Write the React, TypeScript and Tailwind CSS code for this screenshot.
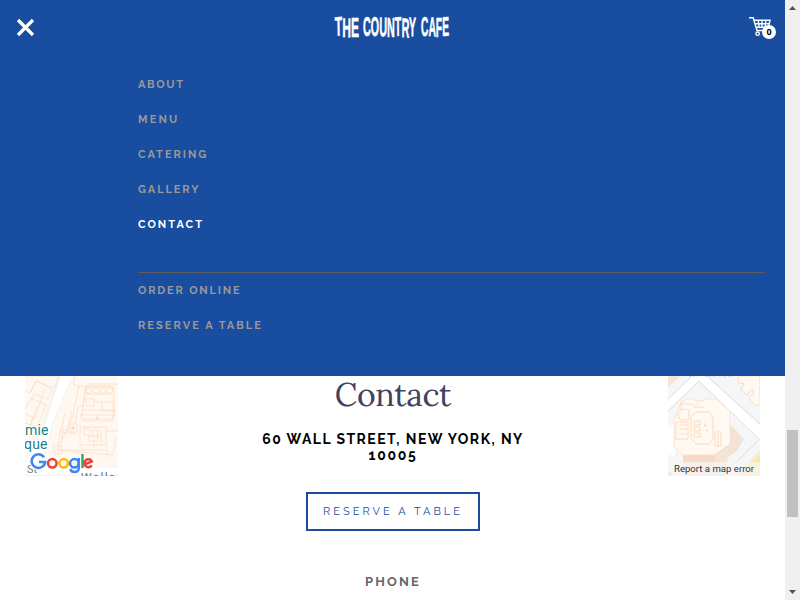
const mainLinks = [
  { label: 'ABOUT', style: 'tracking-[1.7px] text-[#999]' },
  { label: 'MENU', style: 'tracking-[2.2px] text-[#999]' },
  { label: 'CATERING', style: 'tracking-[2px] text-[#999]' },
  { label: 'GALLERY', style: 'tracking-[1.9px] text-[#999]' },
  { label: 'CONTACT', style: 'tracking-[2.05px] text-white' },
];

const actionLinks = [
  { label: 'ORDER ONLINE', style: 'tracking-[1.85px] text-[#999]' },
  { label: 'RESERVE A TABLE', style: 'tracking-[2.06px] text-[#999]' },
];

function NavLink({ label, style }: { label: string; style: string }) {
  return (
    <li className="flex h-[35px] items-center">
      <a className={`whitespace-nowrap text-[11px] leading-none font-bold ${style}`}>{label}</a>
    </li>
  );
}

function Logo() {
  return (
    <svg width="120" height="34" viewBox="0 0 120 34" fill="#fff" stroke="#fff" strokeWidth="0.6" strokeLinejoin="round" className="block overflow-visible font-['Liberation_Sans_Narrow','Liberation_Sans',sans-serif] text-[27px] font-bold">
      <text x="2" y="27" dy="-1 1 0" rotate="-2 1 0" textLength="24" lengthAdjust="spacingAndGlyphs">THE</text>
      <text x="30" y="26" dy="0 0 0 1 -1 1 -1" rotate="0 -1 1 0 -1 2 1" textLength="53" lengthAdjust="spacingAndGlyphs">COUNTRY</text>
      <text x="88" y="26" dy="0 0 1 -1" rotate="-1 1 0 -1" textLength="28" lengthAdjust="spacingAndGlyphs">CAFE</text>
    </svg>
  );
}

function CartIcon() {
  return (
    <svg width="24" height="22" viewBox="0 0 24 22" fill="none" stroke="#fff" strokeWidth="1.4">
      <path d="M0 1.7h4.2l3.8 12.8h11M5.2 4.2h15.8l-1.5 7H7.3M6 7.7h14.3M9.2 4.2l1 7M13 4.2v7M16.8 4.2l-.6 7" />
      <circle cx="8.6" cy="17.7" r="1.7" />
      <circle cx="17" cy="17.7" r="1.7" />
    </svg>
  );
}

function LeftMap() {
  return (
    <svg width="93" height="100" viewBox="0 0 93 100" className="shrink-0">
      <rect width="93" height="100" fill="#fff8f1" />
      <path d="M33 0h15L29 46 18 88l75 3v9H0V86l14-28Z" fill="#f3f3f1" />
      <path d="M36 0h11L27 48 17 89l76 3v6l-93 1V87l17-29Z" fill="#fff" />
      <g fill="none" stroke="#fce0ca" strokeWidth="0.9">
        <path d="M0 0h34l-5 12-18-7-6 12M0 15l5 2 6-12M11 5l16 8-4 10-14-5-9 15M5 22l16 7-9 22-12-4M0 38l8 3-4 12M12 31l-6 18M16 24l-7 20M20 12l-6 17" />
        <path d="M50 0l-2 8 6 2-6 29-12 28M54 10h7l-3 20-5 1-3 17M62 8h31M61 11h28v32H56ZM58 34h32l-3 11H57M47 35l-5 21M40 37l-4 19 15 2" />
        <path d="M45 48h7v8h-7zM55 51h26v18H55ZM59 53h6v6h-6zM68 54h5v7h-5zM64 60h9v5h-9zM76 54v13M69 63v8M81 55h12M36 52l-4 22 56 5 3-18M33 74h49v8M39 53l-5 20" />
        <rect x="60" y="10" width="28" height="8" rx="3" />
        <circle cx="64" cy="14.5" r="2.8" /><circle cx="71" cy="14.5" r="2.8" /><circle cx="78" cy="14.5" r="2.8" /><circle cx="85" cy="14.5" r="2.8" />
        <path d="M61 22v8h8v-7ZM77 26h11v9H77ZM69 26h8M55 39h35M28 70h9v8h-7z" />
      </g>
      <circle cx="48" cy="52" r="2" fill="#fbdcc3" /><circle cx="72" cy="42" r="1.6" fill="#fbdcc3" />
      <g className="font-[Roboto,sans-serif] text-[14px]" fill="#167f8b" stroke="#fff" strokeWidth="2" paintOrder="stroke">
        <text x="0" y="59" textLength="23.5">mie</text>
        <text x="-1" y="73" textLength="23.5">que</text>
      </g>
      <g className="font-[Roboto,sans-serif]" fill="#777c82">
        <text x="2" y="97" className="text-[11px]">St</text>
        <text x="56" y="106" fill="#6677a5" textLength="34" className="text-[12px]">Walls</text>
      </g>
      <g fill="none" strokeWidth="2.5">
        <g stroke="#fff" strokeWidth="4.5">
          <path d="M19 81.2A6.8 6.8 0 1 0 20.2 86H14" />
          <circle cx="27.3" cy="87.3" r="4.3" /><circle cx="38.7" cy="87.3" r="4.3" /><circle cx="49.4" cy="87.3" r="4.3" />
          <path d="M53.8 82v10q0 4-4.5 4-3 0-4-3M57.5 78v14M60.4 88.1l6.5-2.8a4 4 0 1 0-.2 4.2" />
        </g>
        <path d="M19 81.2A6.8 6.8 0 1 0 20.2 86H14" stroke="#4285f4" />
        <circle cx="27.3" cy="87.3" r="4.3" stroke="#ea4335" />
        <circle cx="38.7" cy="87.3" r="4.3" stroke="#fbbc05" />
        <circle cx="49.4" cy="87.3" r="4.3" stroke="#4285f4" />
        <path d="M53.8 82v10q0 4-4.5 4-3 0-4-3" stroke="#4285f4" />
        <path d="M57.5 78v14" stroke="#34a853" />
        <path d="m60.4 88.1 6.5-2.8a4 4 0 1 0-.2 4.2" stroke="#ea4335" />
      </g>
    </svg>
  );
}

function RightMap() {
  return (
    <svg width="92" height="100" viewBox="0 0 92 100" className="shrink-0">
      <rect width="92" height="100" fill="#f5f6f7" />
      <path d="M0 0h13L0 11Z" fill="#f6e5d6" />
      <path d="M0 24 25 0h13l54 49v16L31 5 0 35Z" fill="#fff" />
      <path d="M0 23 24 0M0 35 31 5l61 59M39 0l53 48M92 63 54 100" fill="none" stroke="#dddeda" />
      <path d="m0 52 7-6v36L0 77Z" fill="#fff" />
      <path d="m62 48 14 15-8 13-19 12Z" fill="#f2e3d5" />
      <path d="m6 72 9 7h31l16-11-5 32H15V79Z" fill="#f5e3d4" />
      <path d="M15 79h32v8H15Z" fill="#f4dac7" />
      <path d="m13 26 6-3h7l2 2h7l2-2h12l13 12v33L46 79H15l-9-9V45Z" fill="#fff9f2" stroke="#fbe1ce" />
      <path d="M28 36h13l4 6v21l-4 5H28l-5-6V41ZM13 33l8 1v10h-9l-2-5ZM8 46h12v17H8ZM47 56h6v14h-6zM50 58v12M26 45h6v4h-6zm0 6h6v4h-6zm0 6h6v4h-6zM11 49h8M11 53h8M11 58h8M37 47v4M36 50h3M39 53v3M28 27v2M31 27v2M13 33v-5h10l4 3h9" fill="none" stroke="#fcdac0" />
      <path d="m71 0-1 6 6 2-3 6 6 5 5-6 2 4-5 5 7 8 4-2V0Z" fill="#fff9f2" stroke="#f9dcc2" />
      <path d="M21 0h9M37 0h10M56 0h9" stroke="#adc8df" strokeDasharray="2 2" fill="none" />
      <path d="M92 77v23H69Z" fill="#ffe79c" />
      <path d="m92 75-25 25" stroke="#e7e0ce" fill="none" />
      <path d="M2 96v4M0 98h4" stroke="#8bc6cd" fill="none" />
      <rect y="86" width="92" height="14" fill="#f5f5f5" opacity="0.72" />
      <text x="6" y="96" textLength="80" lengthAdjust="spacingAndGlyphs" className="font-[Roboto,sans-serif] text-[9px]" fill="#333">Report a map error</text>
    </svg>
  );
}

export default function App() {
  return (
    <div className="flex h-[600px] w-[800px] overflow-hidden bg-white font-[Raleway,Lato,sans-serif]">
      <div className="flex w-[785px] flex-col">
        <header className="h-[376px] shrink-0 bg-[#194d9f]">
          <div className="grid h-[54px] grid-cols-3 items-center px-[16px]">
            <svg width="19" height="19" viewBox="0 0 19 19" className="block" fill="none" stroke="#fff" strokeWidth="3.2">
              <path d="m2 2 15 15M17 2 2 17" />
            </svg>
            <div className="flex justify-center"><Logo /></div>
            <div className="flex justify-end">
              <div className="relative mr-[-4px]">
                <CartIcon />
                <span className="absolute top-[9px] left-[13px] flex size-[14px] items-center justify-center rounded-full bg-white font-['Open_Sans',sans-serif] text-[9px] font-bold text-black">0</span>
              </div>
            </div>
          </div>
          <nav className="ml-[138px] mr-[20px] pt-[13px]">
            <ul>{mainLinks.map((link) => <NavLink key={link.label} {...link} />)}</ul>
            <ul className="mt-[30px] border-t border-[#5b5b5b]">{actionLinks.map((link) => <NavLink key={link.label} {...link} />)}</ul>
          </nav>
        </header>
        <section className="flex h-[100px] shrink-0 items-start justify-between px-[25px]">
          <LeftMap />
          <div className="flex flex-col items-center text-center">
            <h1 className="mt-[-1px] h-[40px] font-[Lora,'Liberation_Serif',serif] text-[32px] leading-[40px] tracking-[-0.3px] text-[#414162]">Contact</h1>
            <p className="mt-[16px] w-[290px] text-[14px] leading-4 font-bold tracking-[1.45px] text-black">60 WALL STREET, NEW YORK, NY <span className="tracking-[1.7px]">10005</span></p>
          </div>
          <RightMap />
        </section>
        <div className="mt-4 flex flex-col items-center">
          <button className="h-[39px] w-[174px] border-2 border-[#194d9f] pl-[1px] text-[11px] leading-none font-normal tracking-[3.05px] whitespace-nowrap text-[#194d9f]">RESERVE A TABLE</button>
          <h2 className="mt-[43px] pl-[1px] text-[13px] leading-4 font-bold tracking-[2.1px] text-[#666]">PHONE</h2>
        </div>
      </div>
      <aside className="flex w-[15px] flex-col items-center bg-[#f0f0f0]">
        <svg width="15" height="15" viewBox="0 0 15 15" fill="#505050"><path d="m4 10 3.5-4 3.5 4Z" /></svg>
        <div className="mt-[415px] h-[87px] w-[11px] bg-[#c1c1c1]" />
        <svg width="15" height="15" viewBox="0 0 15 15" className="mt-auto" fill="#505050"><path d="m4 5 3.5 4L11 5Z" /></svg>
      </aside>
    </div>
  );
}
